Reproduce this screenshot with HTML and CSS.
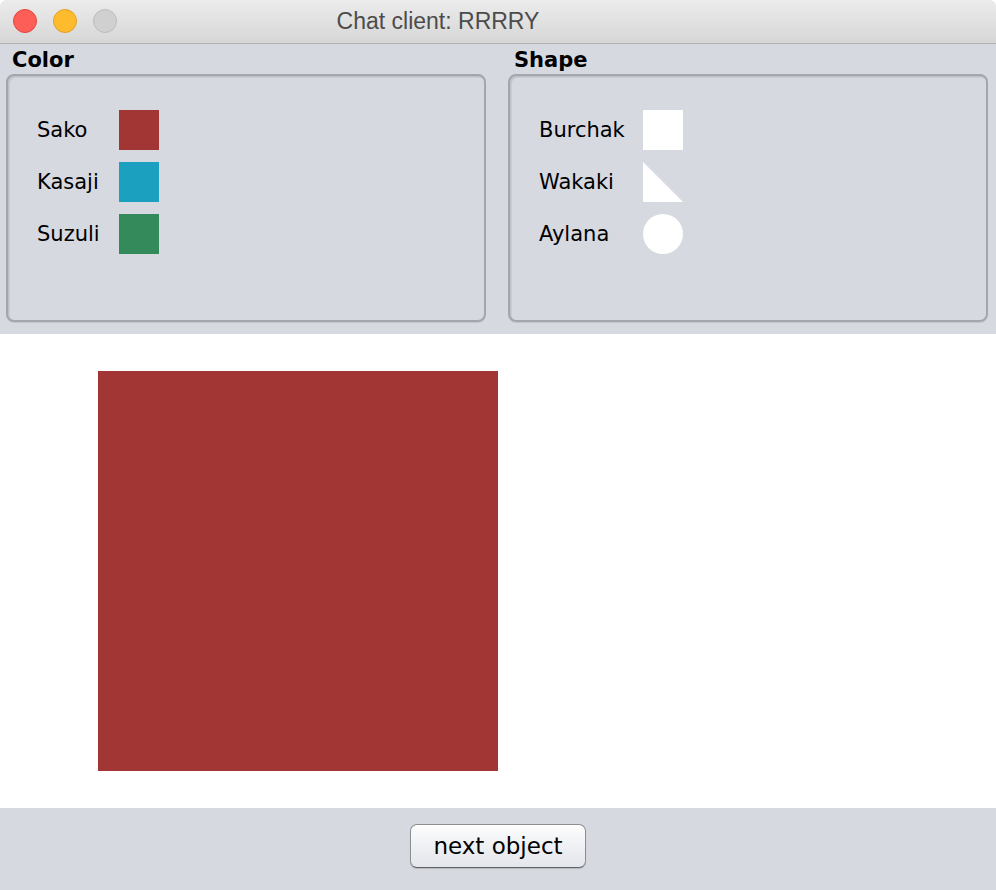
FILE: index.html
```html
<!DOCTYPE html>
<html lang="en">
<head>
  <meta charset="UTF-8">
  <title>Chat client: RRRRY</title>
  <link rel="stylesheet" href="styles.css">
</head>
<body>
  <div class="window">
    <div class="titlebar">
      <div class="lights">
        <span class="light close"></span>
        <span class="light min"></span>
        <span class="light zoom"></span>
      </div>
      <span class="title">Chat client: RRRRY</span>
    </div>

    <div class="options">
      <div class="group">
        <div class="group-label">Color</div>
        <div class="group-box">
          <div class="legend legend-color">
            <span>Sako</span><span class="swatch sako"></span>
            <span>Kasaji</span><span class="swatch kasaji"></span>
            <span>Suzuli</span><span class="swatch suzuli"></span>
          </div>
        </div>
      </div>
      <div class="group">
        <div class="group-label">Shape</div>
        <div class="group-box">
          <div class="legend legend-shape">
            <span>Burchak</span><span class="swatch square"></span>
            <span>Wakaki</span>
            <svg class="swatch-svg" width="40" height="40" viewBox="0 0 40 40"><polygon points="0,0 0,40 40,40" fill="#fff"/></svg>
            <span>Aylana</span><span class="swatch circle"></span>
          </div>
        </div>
      </div>
    </div>

    <div class="canvas">
      <div class="object"></div>
    </div>

    <div class="bottom">
      <button class="next-btn">next object</button>
    </div>
  </div>
</body>
</html>
```

FILE: styles.css
```css
body {
  margin: 0;
  background: #fff;
  font-family: "DejaVu Sans", Verdana, sans-serif;
  color: #000;
}

.window {
  width: 996px;
  height: 890px;
  display: flex;
  flex-direction: column;
  border-radius: 6px 6px 0 0;
  overflow: hidden;
}

.titlebar {
  position: relative;
  height: 43px;
  flex: none;
  background: linear-gradient(#ececec, #d6d6d6);
  border-bottom: 1px solid #b2b2b2;
  display: flex;
  align-items: center;
  justify-content: center;
  padding-right: 120px;
}

.lights {
  position: absolute;
  left: 13px;
  top: 9px;
  display: flex;
  gap: 16px;
}

.light {
  width: 24px;
  height: 24px;
  border-radius: 50%;
  box-sizing: border-box;
}

.light.close { background: #fd5e57; border: 1px solid #e2463f; }
.light.min { background: #febb2e; border: 1px solid #e1a125; }
.light.zoom { background: #d0d0d0; border: 1px solid #bdbdbd; }

.title {
  font-family: "Liberation Sans", Arial, sans-serif;
  font-size: 23px;
  color: #4c4c4c;
}

.options {
  background: #d6d9e0;
  display: flex;
  gap: 22px;
  padding: 2px 8px 12px 6px;
  flex: none;
}

.group {
  flex: 1;
}

.group-label {
  font-weight: bold;
  font-size: 21px;
  line-height: 28px;
  padding-left: 6px;
}

.group-box {
  height: 248px;
  box-sizing: border-box;
  border: 2px solid #a3a6ab;
  border-radius: 8px;
  box-shadow: inset 1px 1px 0 #bcbfc5, inset 2px 2px 0 #cacdd3, 0 1px 0 #c3c6cc;
  padding: 34px 0 0 29px;
}

.legend {
  display: grid;
  grid-auto-rows: 40px;
  row-gap: 12px;
  align-items: center;
  font-size: 21px;
}

.legend-color { grid-template-columns: 82px 40px; }
.legend-shape { grid-template-columns: 104px 40px; }

.swatch {
  width: 40px;
  height: 40px;
  display: block;
}

.swatch-svg { display: block; }

.sako { background: #a23634; }
.kasaji { background: #1ba1bf; }
.suzuli { background: #348a5a; }
.square { background: #fff; }
.circle { background: #fff; border-radius: 50%; }

.canvas {
  flex: 1;
  background: #fff;
  padding: 37px 0 0 98px;
}

.object {
  width: 400px;
  height: 400px;
  background: #a23634;
}

.bottom {
  height: 82px;
  flex: none;
  background: #d6d9e0;
  display: flex;
  justify-content: center;
  padding-top: 16px;
  box-sizing: border-box;
}

.next-btn {
  width: 176px;
  height: 44px;
  font-family: "DejaVu Sans", Verdana, sans-serif;
  font-size: 23px;
  color: #000;
  background: linear-gradient(#fdfdfd, #eceef2 60%, #e4e6ec);
  border: 1px solid #8d8e92;
  border-bottom-color: #5f6064;
  border-radius: 7px;
  box-shadow: 0 1px 1px rgba(0, 0, 0, 0.15);
  padding: 0;
}
```
